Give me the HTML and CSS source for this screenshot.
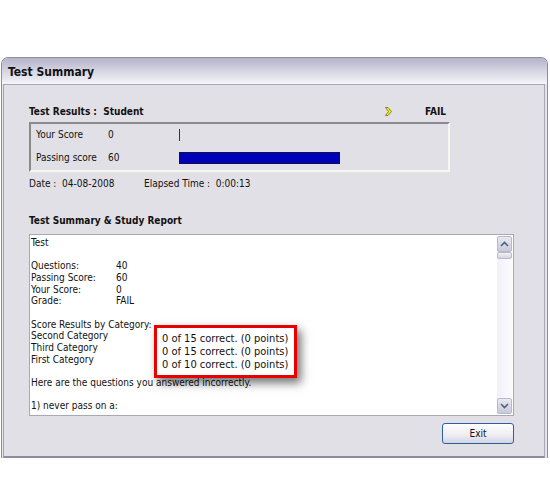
FILE: index.html
```html
<!DOCTYPE html>
<html lang="en">
<head>
    <meta charset="UTF-8">
    <title>Test Summary</title>
    <link rel="stylesheet" href="styles.css">
</head>
<body>

    <div class="window">
        <div class="titlebar">Test Summary</div>

        <div class="frame">
            <div class="results-head">
                <span class="bold">Test Results :&nbsp; Student</span>
                <span class="status">
                    <svg class="arrow" width="7" height="9" viewBox="0 0 7 9">
                        <path d="M0.5 0.5 L3 0.5 L6.5 4.5 L3 8.5 L0.5 8.5 L3.5 4.5 Z" fill="#f5f000" stroke="#6b6b20" stroke-width="0.8"/>
                    </svg>
                    <span class="bold">FAIL</span>
                </span>
            </div>

            <div class="scorebox">
                <div class="score-row">
                    <span class="score-label">Your Score</span>
                    <span class="score-value">0</span>
                    <span class="tick"></span>
                </div>
                <div class="score-row">
                    <span class="score-label">Passing score</span>
                    <span class="score-value">60</span>
                    <span class="bar" style="width: 159px;"></span>
                </div>
            </div>

            <div class="meta">
                <span class="meta-date">Date :&nbsp; 04-08-2008</span>
                <span>Elapsed Time :&nbsp; 0:00:13</span>
            </div>

            <div class="section-title bold">Test Summary &amp; Study Report</div>

            <div class="report">
                <div class="report-text">
                    <div>Test</div>
                    <div>&nbsp;</div>
                    <div class="kv"><span>Questions:</span><span>40</span></div>
                    <div class="kv"><span>Passing Score:</span><span>60</span></div>
                    <div class="kv"><span>Your Score:</span><span>0</span></div>
                    <div class="kv"><span>Grade:</span><span>FAIL</span></div>
                    <div>&nbsp;</div>
                    <div>Score Results by Category:</div>
                    <div>Second Category</div>
                    <div>Third Category</div>
                    <div>First Category</div>
                    <div>&nbsp;</div>
                    <div>Here are the questions you answered incorrectly.</div>
                    <div>&nbsp;</div>
                    <div>1) never pass on a:</div>
                </div>

                <div class="scrollbar">
                    <div class="sb-btn">
                        <svg width="9" height="6" viewBox="0 0 9 6"><path d="M1 5 L4.5 1.5 L8 5" fill="none" stroke="#4d6185" stroke-width="1.6"/></svg>
                    </div>
                    <div class="sb-thumb"></div>
                    <div class="sb-track"></div>
                    <div class="sb-btn">
                        <svg width="9" height="6" viewBox="0 0 9 6"><path d="M1 1 L4.5 4.5 L8 1" fill="none" stroke="#4d6185" stroke-width="1.6"/></svg>
                    </div>
                </div>

                <div class="callout">
                    <div>0 of 15 correct. (0 points)</div>
                    <div>0 of 15 correct. (0 points)</div>
                    <div>0 of 10 correct. (0 points)</div>
                </div>
            </div>

            <div class="actions">
                <button type="button" class="exit-btn">Exit</button>
            </div>
        </div>
    </div>

</body>
</html>
```

FILE: styles.css
```css
body {
    margin: 0;
    background-color: #fff;
    font-family: "DejaVu Sans Condensed", "DejaVu Sans", sans-serif;
    font-size: 10px;
    color: #111;
}

.bold {
    font-weight: bold;
}

.window {
    margin-top: 57px;
    margin-left: 1px;
    width: 545px;
    border: 1px solid #8d8ca0;
    border-bottom: none;
    border-radius: 7px 7px 0 0;
    background-color: #e4e3ea;
}

.titlebar {
    height: 26px;
    line-height: 29px;
    padding-left: 6px;
    font-weight: bold;
    font-size: 12px;
    border-radius: 6px 6px 0 0;
    background: linear-gradient(#b4b3c9, #d9d8e4 55%, #f4f4f8);
}

.frame {
    margin: 0 2px 0 1px;
    border: 1px solid #a7a6b8;
    border-bottom: 2px solid #8d8ca0;
    background-color: #e1e0e6;
    padding: 20px 0 12px 25px;
    display: flex;
    flex-direction: column;
}

.results-head {
    width: 421px;
    height: 13px;
    line-height: 13px;
    display: flex;
    justify-content: space-between;
}

.status {
    display: flex;
    align-items: center;
    gap: 33px;
    padding-right: 4px;
}

.scorebox {
    margin-top: 4px;
    width: 412px;
    height: 41px;
    border: 2px solid;
    border-color: #8a8a8a #f7f7f0 #f7f7f0 #8a8a8a;
    padding: 5px 0 0 5px;
    box-sizing: content-box;
    display: flex;
    flex-direction: column;
    gap: 11px;
}

.score-row {
    height: 12px;
    line-height: 12px;
    display: flex;
    align-items: center;
}

.score-label {
    width: 72px;
}

.score-value {
    width: 71px;
}

.tick {
    width: 1px;
    height: 12px;
    background-color: #333;
}

.bar {
    height: 10px;
    border: 1px solid #10104a;
    background-color: #0000b8;
}

.meta {
    margin-top: 5px;
    height: 13px;
    line-height: 13px;
    display: flex;
}

.meta-date {
    width: 115px;
}

.section-title {
    margin-top: 24px;
    height: 13px;
    line-height: 13px;
}

.report {
    position: relative;
    margin-top: 7px;
    width: 483px;
    height: 180px;
    border: 1px solid #a9a9b5;
    background-color: #fff;
    display: flex;
}

.report-text {
    flex: 1;
    padding: 2px 0 0 1px;
    line-height: 11.65px;
}

.kv {
    display: flex;
}

.kv span:first-child {
    width: 85px;
}

.scrollbar {
    width: 15px;
    margin: 1px 1px 1px 0;
    display: flex;
    flex-direction: column;
    background: linear-gradient(to right, #f2f1f8, #fbfbfe);
}

.sb-btn {
    height: 14px;
    border: 1px solid #b9b9cc;
    border-radius: 2px;
    background: linear-gradient(#e9e9f2, #c9c9d9);
    display: flex;
    align-items: center;
    justify-content: center;
}

.sb-thumb {
    height: 5px;
    border: 1px solid #b9b9cc;
    border-radius: 2px;
    background: linear-gradient(#f2f2f8, #d5d5e2);
}

.sb-track {
    flex: 1;
}

.callout {
    position: absolute;
    left: 124px;
    top: 90px;
    width: 132px;
    height: 43px;
    padding: 4px 0 0 5px;
    border: 3px solid #e80000;
    background-color: #fff;
    font-size: 11px;
    line-height: 13px;
    box-shadow: 4px 5px 9px rgba(0, 0, 0, 0.55);
}

.actions {
    margin-top: 7px;
    width: 485px;
    display: flex;
    justify-content: flex-end;
}

.exit-btn {
    width: 72px;
    height: 21px;
    padding: 0;
    border: 1px solid #2d5ea6;
    border-radius: 3px;
    background: linear-gradient(#ffffff, #ececf2 60%, #d4d4e0);
    font-family: inherit;
    font-size: 10px;
    color: #111;
}
```
